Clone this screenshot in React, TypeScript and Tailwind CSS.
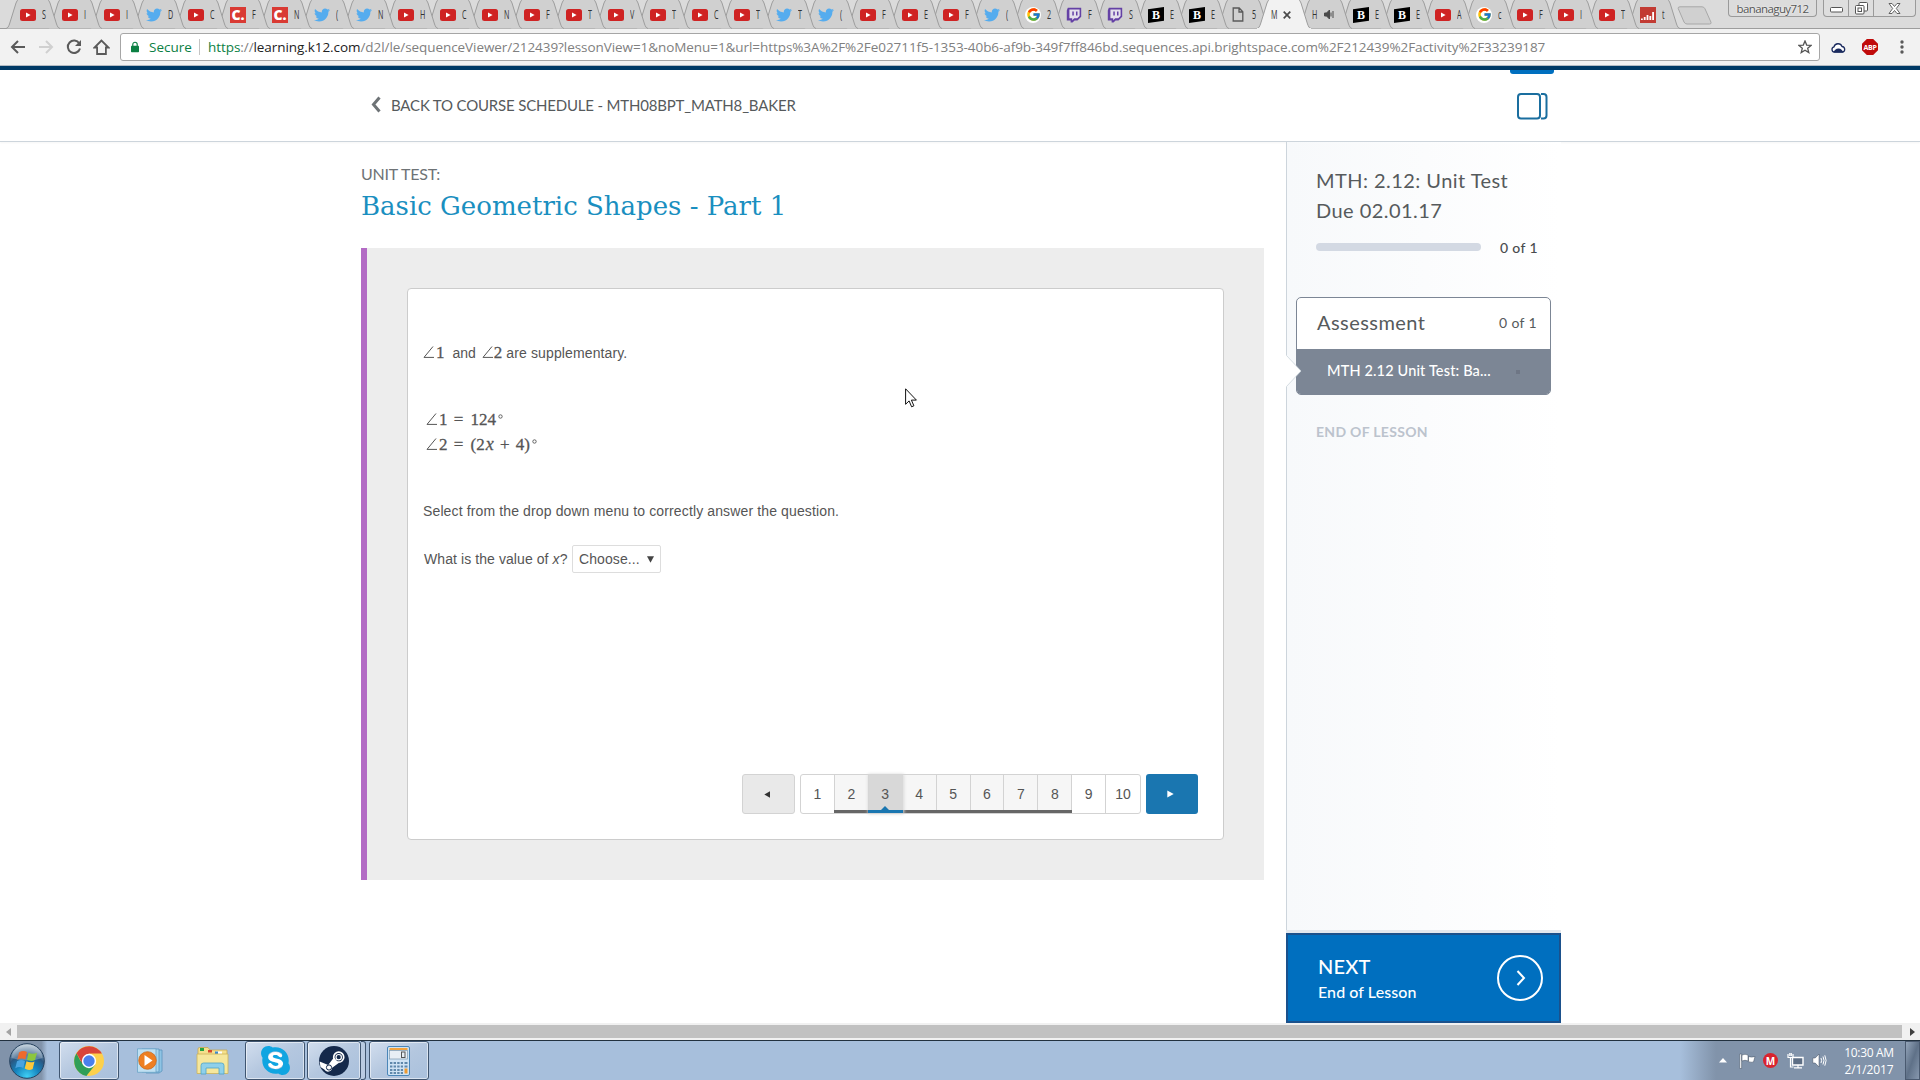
import type { ReactNode } from 'react';
import clsx from 'clsx';
import { FaSkype, FaTwitter } from 'react-icons/fa';
import { FcGoogle } from 'react-icons/fc';

type TabIcon = 'yt' | 'tw' | 'c' | 'google' | 'twitch' | 'b' | 'doc' | 'active' | 'audio' | 'chart';

interface Tab {
  icon: TabIcon;
  title: string;
}

const tabs: Tab[] = [
  { icon: 'yt', title: 'S' },
  { icon: 'yt', title: 'I' },
  { icon: 'yt', title: 'I' },
  { icon: 'tw', title: 'D' },
  { icon: 'yt', title: 'C' },
  { icon: 'c', title: 'F' },
  { icon: 'c', title: 'N' },
  { icon: 'tw', title: '(' },
  { icon: 'tw', title: 'N' },
  { icon: 'yt', title: 'H' },
  { icon: 'yt', title: 'C' },
  { icon: 'yt', title: 'N' },
  { icon: 'yt', title: 'F' },
  { icon: 'yt', title: 'T' },
  { icon: 'yt', title: 'V' },
  { icon: 'yt', title: 'T' },
  { icon: 'yt', title: 'C' },
  { icon: 'yt', title: 'T' },
  { icon: 'tw', title: 'T' },
  { icon: 'tw', title: '(' },
  { icon: 'yt', title: 'F' },
  { icon: 'yt', title: 'E' },
  { icon: 'yt', title: 'F' },
  { icon: 'tw', title: '(' },
  { icon: 'google', title: '2' },
  { icon: 'twitch', title: 'F' },
  { icon: 'twitch', title: 'S' },
  { icon: 'b', title: 'E' },
  { icon: 'b', title: 'E' },
  { icon: 'doc', title: '5' },
  { icon: 'active', title: 'M' },
  { icon: 'audio', title: 'H' },
  { icon: 'b', title: 'E' },
  { icon: 'b', title: 'E' },
  { icon: 'yt', title: 'A' },
  { icon: 'google', title: 'c' },
  { icon: 'yt', title: 'F' },
  { icon: 'yt', title: 'I' },
  { icon: 'yt', title: 'T' },
  { icon: 'chart', title: 't' },
];

function Favicon({ icon }: { icon: TabIcon }) {
  switch (icon) {
    case 'yt':
      return (
        <svg width="16" height="12" viewBox="0 0 16 12">
          <rect width="16" height="12" rx="2.5" fill="#cf2323" />
          <path d="M6 3.4v5.2L10.6 6z" fill="#fff" />
        </svg>
      );
    case 'tw':
      return <FaTwitter className="size-4 text-[#55acee]" />;
    case 'c':
      return (
        <span className="flex h-4 w-4 items-center justify-center bg-[#d93a33] font-['Open_Sans',sans-serif] text-[14px] leading-none font-extrabold text-white">
          C.
        </span>
      );
    case 'google':
      return (
        <span className="flex size-4 items-center justify-center rounded-full bg-white">
          <FcGoogle className="size-[15px]" />
        </span>
      );
    case 'twitch':
      return (
        <svg width="16" height="16" viewBox="0 0 16 16">
          <path d="M1.8.8h13.4v9l-3.7 3.7H8.6L6.5 15.6H4.6v-2.1H.8V3.6z" fill="#6441a5" />
          <path d="M3.4 2.4h10.2v6.7l-2.3 2.2H8.2l-2 1.9v-1.9H3.4z" fill="#e4e0ec" />
          <path d="M6.3 4.6h1.5v4H6.3zM10 4.6h1.5v4H10z" fill="#6441a5" />
        </svg>
      );
    case 'b':
      return (
        <span className="relative flex size-4 items-center justify-center font-['Liberation_Serif',serif] text-[12px] leading-none font-bold text-white">
          <svg className="absolute inset-0" width="16" height="16" viewBox="0 0 16 16">
            <path d="M0 2.2L16 0v13.8L0 16z" fill="#000" />
          </svg>
          <span className="relative">B</span>
        </span>
      );
    case 'doc':
      return (
        <svg width="12" height="15" viewBox="0 0 12 15" fill="none" stroke="#5a5a5a" strokeWidth="1.3">
          <path d="M1.2 1h6l3.6 3.8V14H1.2zM7 1v4h3.8" />
        </svg>
      );
    case 'chart':
      return (
        <svg width="16" height="16" viewBox="0 0 16 16">
          <rect width="16" height="16" fill="#c23b33" />
          <path d="M1 11.500h1.800V13H1zM3.800 10h1.800v3H3.800zM6.600 8h1.800v5H6.600zM9.400 9h1.800v4H9.400zM12.200 5H14v8h-1.800z" fill="#fff" />
        </svg>
      );
    default:
      return null;
  }
}

function SpeakerIcon() {
  return (
    <svg width="12" height="11" viewBox="0 0 12 11" fill="none" stroke="#4a4a4a" strokeWidth="1">
      <path d="M.5 4h2L5.500 1v9L2.500 7h-2z" fill="#4a4a4a" />
      <path d="M7 3.500v4M9 2v7" />
    </svg>
  );
}

function TabTitle({ children }: { children: ReactNode }) {
  return (
    <span className="w-[5px] shrink-0 text-[12px] leading-4 text-[#333]">
      <span className="inline-block origin-left scale-x-[0.6]">{children}</span>
    </span>
  );
}

function BrowserTab({ tab, index }: { tab: Tab; index: number }) {
  const active = tab.icon === 'active';
  return (
    <div
      className={clsx('relative h-[29px] shrink-0', index < 21 ? 'w-[42px]' : 'w-[41px]')}
      style={{ zIndex: active ? 100 : 60 - index }}
    >
      <svg className="absolute top-0 left-0" width="55" height="29" viewBox="0 0 55 29">
        <path
          d="M0 28.500C2 28 2.500 26.500 3.500 24L10 3Q11 0 13 -1H41Q43 0 44 3L50.500 24C51.500 26.500 52 28 54 28.500"
          fill={active ? '#f2f2f2' : '#d0d0d0'}
          stroke="#9d9d9d"
        />
        {active && <path d="M0 29h54" stroke="#f2f2f2" strokeWidth="2" />}
      </svg>
      {active || tab.icon === 'audio' ? (
        <div className="relative flex h-[29px] items-center gap-[7px] pl-[14px]">
          <TabTitle>{tab.title}</TabTitle>
          {active ? (
            <svg width="8" height="8" viewBox="0 0 8 8" stroke="#4a4a4a" strokeWidth="1.700">
              <path d="M.7.7l6.600 6.600M7.300.7L.7 7.300" />
            </svg>
          ) : (
            <SpeakerIcon />
          )}
        </div>
      ) : (
        <div className="relative flex h-[29px] items-center gap-[6px] pl-[14px]">
          <span className="flex w-4 shrink-0 justify-center">
            <Favicon icon={tab.icon} />
          </span>
          <TabTitle>{tab.title}</TabTitle>
        </div>
      )}
    </div>
  );
}

function WindowControls() {
  return (
    <div className="ml-auto flex items-start gap-[6px] pr-1">
      <div className="flex h-[17px] w-[89px] items-center justify-center rounded-b-[4px] border border-t-0 border-[#9a9a9a] bg-[#dcdcdc] pt-[2px] text-[11.5px] leading-none tracking-[-0.6px] text-[#555] [text-shadow:0_0_2px_#fff]">
        bananaguy712
      </div>
      <div className="flex h-[17px] w-[93px] rounded-b-[4px] border border-t-0 border-[#9a9a9a] bg-[#dedede]">
        <div className="flex w-[25px] items-center justify-center border-r border-[#9a9a9a] pt-[3px]">
          <svg width="13" height="6" viewBox="0 0 13 6">
            <rect x=".5" y=".5" width="12" height="4.500" rx="1" fill="#fff" stroke="#555" />
          </svg>
        </div>
        <div className="flex w-[25px] items-center justify-center border-r border-[#9a9a9a]">
          <svg width="13" height="13" viewBox="0 0 13 13" fill="#fff" stroke="#555">
            <rect x="4" y=".5" width="8.500" height="8.500" rx="1" />
            <rect x=".5" y="3.500" width="8.500" height="8.500" rx="1" />
            <rect x="3" y="6" width="3.500" height="3.500" />
          </svg>
        </div>
        <div className="flex flex-1 items-center justify-center">
          <svg width="13" height="11" viewBox="0 0 13 11">
            <path d="M1 .5h3l2.500 3 2.500-3h3L8.300 5.500l3.700 5H9L6.500 7.500 4 10.500H1l3.700-5z" fill="#fff" stroke="#555" strokeWidth=".9" />
          </svg>
        </div>
      </div>
    </div>
  );
}

function TabStrip() {
  return (
    <div className="relative flex h-[29px] shrink-0 bg-[#dbdbdb] pl-[6px] font-['Open_Sans',sans-serif]">
      <div className="absolute bottom-0 left-0 h-px w-full bg-[#9d9d9d]" />
      {tabs.map((tab, i) => (
        <BrowserTab key={i} tab={tab} index={i} />
      ))}
      <svg className="mt-[6px] ml-[10px]" width="35" height="19" viewBox="0 0 35 19">
        <path d="M3 .8h22q2 0 3 2l6 13.500q.6 1.700-1.500 1.700H10q-2 0-3-2L1.200 2.500Q.8.8 3 .8z" fill="#d0d0d0" stroke="#a8a8a8" />
      </svg>
      <WindowControls />
    </div>
  );
}

function Toolbar() {
  return (
    <div className="flex h-[37px] shrink-0 items-center border-b border-[#b4bcc4] bg-[#f2f2f2] font-['Open_Sans',sans-serif]">
      <div className="flex w-[120px] shrink-0 items-center pl-[10px]">
        <svg width="15" height="14" viewBox="0 0 15 14" fill="none" stroke="#5a5a5a" strokeWidth="2">
          <path d="M15 7H2M8 1L2 7l6 6" />
        </svg>
        <svg className="ml-[14px]" width="15" height="14" viewBox="0 0 15 14" fill="none" stroke="#d0d0d0" strokeWidth="2">
          <path d="M0 7h13M7 1l6 6-6 6" />
        </svg>
        <svg className="ml-[12px]" width="16" height="16" viewBox="0 0 16 16" fill="none" stroke="#5a5a5a" strokeWidth="2">
          <path d="M13.300 4.500A6.200 6.200 0 1 0 14 9.500" />
          <path d="M15 1v6H9z" fill="#5a5a5a" stroke="none" />
        </svg>
        <svg className="ml-[11px]" width="17" height="16" viewBox="0 0 17 16" fill="none" stroke="#5a5a5a" strokeWidth="1.800">
          <path d="M8.500 1.500L1.500 8.500h2.600V15h8.800V8.500h2.600z" />
        </svg>
      </div>
      <div className="flex h-[28px] w-[1700px] shrink-0 items-center rounded-[3px] border border-[#a6a6a6] bg-white pl-[10px]">
        <svg width="8" height="12" viewBox="0 0 9 12">
          <rect y="4.500" width="9" height="7.500" rx=".8" fill="#0b8043" />
          <path d="M2 5V3.200a2.500 2.500 0 0 1 5 0V5" fill="none" stroke="#0b8043" strokeWidth="1.300" />
        </svg>
        <span className="ml-[10px] w-[50px] text-[13.500px] leading-5 text-[#0b8043]">Secure</span>
        <span className="mr-[8px] h-[16px] w-px bg-[#c4c4c4]" />
        <span className="text-[13.500px] leading-5 tracking-[-0.067px] whitespace-nowrap text-[#808080]">
          <span className="text-[#0b8043]">https</span>://<span className="text-[#222]">learning.k12.com</span>
          /d2l/le/sequenceViewer/212439?lessonView=1&amp;noMenu=1&amp;url=https%3A%2F%2Fe02711f5-1353-40b6-af9b-349f7ff846bd.sequences.api.brightspace.com%2F212439%2Factivity%2F33239187
        </span>
        <svg className="mr-[7px] ml-auto" width="14" height="14" viewBox="0 0 14 14" fill="none" stroke="#555" strokeWidth="1.300">
          <path d="M7 1l1.700 4.100 4.400.3-3.400 2.900 1.100 4.300L7 10.300l-3.800 2.300 1.100-4.300L.9 5.400l4.400-.3z" />
        </svg>
      </div>
      <svg className="ml-[11px]" width="15" height="11" viewBox="0 0 15 11">
        <path d="M3.500 10.200a2.700 2.700 0 0 1-.5-5.300A4.200 4.200 0 0 1 11 4.500a2.900 2.900 0 0 1 .5 5.700z" fill="#fff" stroke="#1a2a5e" strokeWidth="1.300" />
        <path d="M2.500 10.500c.5-2 2.500-4 5-4s4 2 5 4z" fill="#1a2a5e" />
      </svg>
      <span className="ml-[16px] flex size-4 items-center justify-center bg-[#c00b0b] text-[7px] leading-none font-bold tracking-[-0.3px] text-white [clip-path:polygon(30%_0,70%_0,100%_30%,100%_70%,70%_100%,30%_100%,0_70%,0_30%)]">
        ABP
      </span>
      <svg className="ml-[22px]" width="4" height="14" viewBox="0 0 4 14" fill="#5a5a5a">
        <circle cx="2" cy="2" r="1.700" />
        <circle cx="2" cy="7" r="1.700" />
        <circle cx="2" cy="12" r="1.700" />
      </svg>
    </div>
  );
}

function CourseHeader() {
  return (
    <header className="flex h-[76px] shrink-0 flex-col border-b border-[#cdd5dc] shadow-[0_1px_2px_rgba(0,0,0,0.04)]">
      <div className="h-1 shrink-0 bg-[#003a66]" />
      <div className="flex flex-1 items-start">
        <div className="flex w-[1510px] items-center pt-[25px] pl-[371px]">
          <svg className="-mt-px" width="10" height="17" viewBox="0 0 10 17" fill="none" stroke="#6e7376" strokeWidth="3">
            <path d="M8.500 1.500L2.500 8.500l6 7" />
          </svg>
          <span className="ml-[10px] text-[15px] leading-5 tracking-[-0.18px] text-[#565a5c]">
            BACK TO COURSE SCHEDULE - MTH08BPT_MATH8_BAKER
          </span>
        </div>
        <div className="flex w-[44px] flex-col items-center">
          <div className="h-1 w-full rounded-b-[3px] bg-[#006fbf]" />
          <svg className="mt-[19px]" width="31" height="27" viewBox="0 0 31 27" fill="none" stroke="#1a6e9f" strokeWidth="2">
            <rect x="1" y="1" width="22" height="24.500" rx="3" />
            <path d="M24 1h2.500q3 0 3 3v18.500q0 3-3 3H24" />
          </svg>
        </div>
      </div>
    </header>
  );
}

function Angle() {
  return (
    <svg className="inline-block align-baseline" width="11" height="12" viewBox="0 0 11 12" fill="none" stroke="#555" strokeWidth="1">
      <path d="M10 .5L1 11.400h10" />
    </svg>
  );
}

function Degree() {
  return (
    <span className="ml-[2px]">
      <svg className="mb-[10px] inline-block" width="5" height="5" viewBox="0 0 5 5" fill="none" stroke="#555" strokeWidth=".9">
        <circle cx="2.500" cy="2.500" r="1.700" />
      </svg>
    </span>
  );
}

const pages = [1, 2, 3, 4, 5, 6, 7, 8, 9, 10];

function Pager() {
  return (
    <div className="flex h-10 gap-[5px]">
      <button className="flex w-[53px] items-center justify-center rounded-[3px] border border-[#d3d3d3] bg-[#e9e9e9]">
        <svg className="-ml-1" width="6" height="7" viewBox="0 0 6 7">
          <path d="M6 .3v6.400L.3 3.500z" fill="#333" />
        </svg>
      </button>
      <div className="flex w-[341px] rounded-[3px] border border-[#d3d3d3] bg-white">
        {pages.map((page) => {
          const answered = page >= 2 && page <= 8;
          const current = page === 3;
          return (
            <div
              key={page}
              className={clsx(
                'relative flex w-[34px] items-center justify-center border-r border-[#d3d3d3] text-[14px] last:border-r-0',
                answered && !current && 'bg-[#f6f6f6]',
                current && 'z-10 border-[#d8d8d8] bg-[#d8d8d8] shadow-[0_0_3px_1px_#d8d8d8]',
              )}
            >
              {page}
              {answered && (
                <span className={clsx('absolute bottom-0 left-[-1px] h-[3px] w-[35px]', current ? 'bg-[#1a76b0]' : 'bg-[#666]')} />
              )}
              {current && (
                <svg className="absolute bottom-[3px] left-[12px]" width="8" height="4" viewBox="0 0 8 4">
                  <path d="M0 4l4-4 4 4z" fill="#1a76b0" />
                </svg>
              )}
            </div>
          );
        })}
      </div>
      <button className="flex w-[52px] items-center justify-center rounded-[3px] bg-[#1a76b0]">
        <svg className="-ml-1" width="7" height="8" viewBox="0 0 7 8">
          <path d="M.3.4v7.200L6.700 4z" fill="#fff" />
        </svg>
      </button>
    </div>
  );
}

function Question() {
  return (
    <div className="flex h-[552px] w-[817px] flex-col rounded-[4px] border border-[#ccc] bg-white pt-[52px] pr-[25px] pb-[25px] pl-[15px] font-['Liberation_Sans',Arial,sans-serif] text-[14px] leading-6 text-[#555]">
      <div className="flex h-6 items-baseline whitespace-pre">
        <Angle />
        <span className="ml-[2px] font-['Liberation_Serif',serif] text-[17px] [-webkit-text-stroke:0.3px_#555]">1</span>
        <span className="ml-[8px]">and</span>
        <span className="ml-[6px] flex items-baseline">
          <Angle />
          <span className="ml-px font-['Liberation_Serif',serif] text-[17px] [-webkit-text-stroke:0.3px_#555]">2</span>
        </span>
        <span className="ml-[4px] tracking-[0.12px]">are supplementary.</span>
      </div>
      <div className="mt-[43px] flex flex-col pl-[3px] font-['Liberation_Serif',serif] text-[17px] leading-6 [-webkit-text-stroke:0.3px_#555]">
        <div className="flex h-6 items-baseline">
          <Angle />
          <span className="ml-[2px]">1</span>
          <span className="ml-[5px] w-[12px] text-center">=</span>
          <span className="ml-[6px]">124</span>
          <Degree />
        </div>
        <div className="flex h-6 items-baseline">
          <Angle />
          <span className="ml-[2px]">2</span>
          <span className="ml-[5px] w-[12px] text-center">=</span>
          <span className="ml-[6px]">(2</span>
          <i className="ml-px text-[18px]">x</i>
          <span className="ml-[5px] w-[12px] text-center">+</span>
          <span className="ml-[5px]">4)</span>
          <Degree />
        </div>
      </div>
      <p className="mt-[43px] h-6 tracking-[0.13px]">Select from the drop down menu to correctly answer the question.</p>
      <div className="mt-[22px] flex h-[28px] items-center pl-px">
        <span className="w-[148px] tracking-[0.08px] whitespace-nowrap">
          What is the value of <i>x</i>?
        </span>
        <button className="flex h-[28px] w-[89px] items-center justify-between rounded-[2px] border border-[#ddd] bg-white pr-[6px] pl-[6px] tracking-[0.1px]">
          Choose...
          <svg width="7" height="7" viewBox="0 0 7 7">
            <path d="M0 .3h7L3.500 6.700z" fill="#444" />
          </svg>
        </button>
      </div>
      <div className="mt-auto flex justify-end">
        <Pager />
      </div>
    </div>
  );
}

function Sidebar() {
  return (
    <aside className="flex h-[881px] w-[275px] shrink-0 flex-col">
      <div className="relative flex h-[788px] flex-col border-l border-[#cdd5dc] bg-linear-to-r from-[#f7f9fb] to-white">
        <div className="pt-[23px] pl-[29px] text-[20px] leading-[30px] tracking-[0.45px] text-[#565a5c]">
          <div>MTH: 2.12: Unit Test</div>
          <div>Due 02.01.17</div>
        </div>
        <div className="mt-[12px] flex h-5 items-center pl-[29px]">
          <span className="-mt-px h-2 w-[165px] rounded-full bg-[#d3d9e3]" />
          <span className="ml-[19px] text-[14px] font-medium tracking-[0.35px] text-[#494c4e]">0 of 1</span>
        </div>
        <div className="mt-[40px] ml-[9px] h-[98px] w-[255px] overflow-hidden rounded-[5px] border border-[#7c8695] bg-white">
          <div className="flex h-[51px] items-center justify-between pr-[13px] pb-[3px] pl-[20px] text-[#565a5c]">
            <span className="text-[20px] tracking-[0.45px]">Assessment</span>
            <span className="text-[14px] tracking-[0.35px]">0 of 1</span>
          </div>
          <div className="flex h-[46px] items-center bg-[#7c8695] pb-[3px] pl-[30px]">
            <span className="w-[189px] text-[14.5px] font-medium tracking-[0.15px] whitespace-nowrap text-white">MTH 2.12 Unit Test: Ba...</span>
            <span className="mt-[3px] size-1 bg-[#6e7685]" />
          </div>
        </div>
        <svg className="absolute top-[213px] left-[-1px]" width="16" height="32" viewBox="0 0 16 32">
          <path d="M0 0l15 16L0 32z" fill="#fff" />
          <path d="M.5.5l14.500 15.500L.5 31.500" fill="none" stroke="#cdd5dc" strokeWidth=".8" />
        </svg>
        <div className="mt-[27px] pl-[29px] text-[14px] leading-5 font-bold tracking-[0.3px] text-[#bcc3cd]">END OF LESSON</div>
      </div>
      <div className="h-[3px] shrink-0 bg-[#e3e8ee]" />
      <div className="flex h-[90px] shrink-0 items-center justify-between border-2 border-[#1b518c] bg-[#006fbf] pr-[16px] pl-[30px] text-white">
        <div className="flex flex-col">
          <span className="text-[20px] leading-[27px] font-medium tracking-[0.2px]">NEXT</span>
          <span className="text-[16px] leading-6 font-medium tracking-[0.08px]">End of Lesson</span>
        </div>
        <svg width="46" height="46" viewBox="0 0 46 46" fill="none" stroke="#fff" strokeWidth="2">
          <circle cx="23" cy="23" r="22" />
          <path d="M20.500 16l6.500 7-6.500 7" />
        </svg>
      </div>
    </aside>
  );
}

function ScrollBar() {
  return (
    <div className="flex h-[17px] shrink-0 items-center bg-[#f1f1f1]">
      <svg className="mx-[6px]" width="5" height="8" viewBox="0 0 5 8">
        <path d="M5 0v8L0 4z" fill="#a3a3a3" />
      </svg>
      <div className="h-[13px] w-[1885px] bg-[#c1c1c1]" />
      <svg className="ml-[8px]" width="5" height="8" viewBox="0 0 5 8">
        <path d="M0 0v8l5-4z" fill="#404040" />
      </svg>
    </div>
  );
}

function TaskButton({ children, className }: { children: ReactNode; className?: string }) {
  return (
    <div
      className={clsx(
        'flex h-[39px] shrink-0 items-center justify-center rounded-[3px] border border-[#3f5570] bg-linear-to-br from-[#d2deee] via-[#b4c7df] to-[#a9c0dc] shadow-[inset_0_0_0_1px_rgba(255,255,255,0.55)]',
        className,
      )}
    >
      {children}
    </div>
  );
}

function StartOrb() {
  return (
    <svg width="36" height="36" viewBox="0 0 36 36">
      <defs>
        <radialGradient id="orb" cx=".5" cy=".95" r=".9">
          <stop offset="0" stopColor="#3fd0f5" />
          <stop offset=".4" stopColor="#1583bd" />
          <stop offset=".7" stopColor="#2b5680" />
          <stop offset="1" stopColor="#a9bccd" />
        </radialGradient>
      </defs>
      <circle cx="18" cy="18" r="17.300" fill="url(#orb)" stroke="#26425f" strokeWidth="1" />
      <path d="M2.500 15a15.600 15.600 0 0 1 31 0q-15 5-31 0z" fill="#fff" opacity=".25" />
      <path d="M10 9.500q4-2.500 8-.5l-1.700 7.500q-4-2-8 .3z" fill="#ef6a2c" />
      <path d="M19.500 9.800q4 2 8.500 0l-2 7.200q-4 2-8-.2z" fill="#8cc63f" />
      <path d="M8 18.200q4-2.300 8-.3L14.300 25q-4-2-8 .3z" fill="#4aa3e0" />
      <path d="M17.500 18.300q4 2 8 .2L23.700 26q-4 2-8-.4z" fill="#fdc83a" />
    </svg>
  );
}

function ChromeLogo() {
  return (
    <svg width="30" height="30" viewBox="0 0 30 30">
      <circle cx="15" cy="15" r="15" fill="#fcd04b" />
      <path d="M2.500 7.200L8.500 18.700 15 22.500 12.500 30A15 15 0 0 1 2.500 7.200z" fill="#2f9e58" />
      <path d="M12.500 29.800L21.300 18.800 15 15 6 15z" fill="#2f9e58" />
      <path d="M2.500 7.200A15 15 0 0 1 27.900 7.500H15L8.500 18z" fill="#d8453a" />
      <circle cx="15" cy="15" r="7.200" fill="#fff" />
      <circle cx="15" cy="15" r="5.700" fill="#4a80ec" />
    </svg>
  );
}

function MediaPlayerIcon() {
  return (
    <svg width="29" height="26" viewBox="0 0 29 26">
      <path d="M9 2h16v21l-3 2H9z" fill="#8fc4e4" stroke="#5b96bd" strokeWidth=".8" />
      <path d="M5 1h17v23H5z" fill="#a8d6ee" stroke="#5b96bd" strokeWidth=".8" />
      <path d="M.5.800h18.500v23.500H.5z" fill="#bfe0f2" stroke="#6ba3c7" strokeWidth=".8" />
      <circle cx="10.500" cy="12.500" r="8.800" fill="#ee7f22" stroke="#c96a1f" strokeWidth=".8" />
      <path d="M7.500 7v11l8-5.500z" fill="#fff" />
    </svg>
  );
}

function FolderIcon() {
  return (
    <svg width="33" height="29" viewBox="0 0 33 29">
      <path d="M2 3q0-1.500 1.500-1.500H12L14 4h17v8H2z" fill="#f5e08c" stroke="#c8a850" strokeWidth=".8" />
      <path d="M4 2h4v3H4z" fill="#25a541" />
      <path d="M12 4h4v2.500h-4z" fill="#d9482b" />
      <path d="M20 5.500h6V8h-6z" fill="#fff" />
      <path d="M19 5.500h3V8h-3z" fill="#3b8ad0" />
      <path d="M1 8h31v19.500H1z" fill="#f6e79c" stroke="#cdb259" strokeWidth=".8" />
      <path d="M5 28V19.500q0-2.500 2.500-2.500h18q2.500 0 2.500 2.500V28h-5v-6H10v6z" fill="#8fd0ea" stroke="#4fa3c7" strokeWidth=".8" />
    </svg>
  );
}

function SteamLogo() {
  return (
    <svg width="30" height="30" viewBox="0 0 30 30">
      <circle cx="15" cy="15" r="15" fill="#14294b" />
      <circle cx="19.700" cy="11.200" r="5" fill="none" stroke="#fff" strokeWidth="1.700" />
      <circle cx="19.700" cy="11.200" r="2.700" fill="none" stroke="#fff" strokeWidth="1.200" />
      <path d="M.6 15.500l8.600 3.400 5.700-7.400 4.800 5.500-6.500 4.800a4.300 4.300 0 0 1-7.900 1.800L1.500 21z" fill="#fff" />
      <circle cx="10" cy="21.500" r="2.600" fill="none" stroke="#14294b" strokeWidth="1" />
    </svg>
  );
}

function CalculatorIcon() {
  return (
    <svg width="23" height="30" viewBox="0 0 23 30">
      <rect x=".5" y=".5" width="22" height="29" rx="1.500" fill="#cfe3f4" stroke="#4a86b8" />
      <rect x="2.500" y="2" width="18" height="2" fill="#f1a33f" />
      <rect x="2.500" y="4.500" width="18" height="8.500" fill="#e8eff5" stroke="#7d98ae" strokeWidth=".7" />
      <rect x="14.500" y="6" width="3.500" height="5.500" fill="none" stroke="#555" />
      <path d="M3 17h13M3 20.500h13M3 24h13M3 27h13" stroke="#5f88ab" strokeWidth="2" strokeDasharray="2.400 1.200" />
      <path d="M17.500 17h3M17.500 20.500h3" stroke="#5f88ab" strokeWidth="2" />
      <path d="M17.500 25h3" stroke="#ee9a30" strokeWidth="5" />
    </svg>
  );
}

function Tray() {
  return (
    <div className="ml-auto flex h-[39px] w-[240px] items-center bg-linear-to-r from-[#a7bfdc] via-[#8193aa] via-15% to-[#8193aa]">
      <svg className="ml-[39px]" width="8" height="5" viewBox="0 0 8 5">
        <path d="M0 4.500L4 0l4 4.500z" fill="#fff" />
      </svg>
      <svg className="ml-[12px]" width="17" height="16" viewBox="0 0 17 16" fill="#fff" stroke="#3c4a5c" strokeWidth=".5">
        <path d="M.8 1h1.800v14.500H.8z" />
        <path d="M3 2q3-1.500 6 0v6Q6 6.500 3 8zM9.500 3.500q3 1.200 6.500 0l-1.500 5.500q-2 .6-5-.3z" />
      </svg>
      <span className="ml-[7px] flex size-[15px] items-center justify-center rounded-full bg-[#d9232e] font-['Open_Sans',sans-serif] text-[10px] leading-none font-bold text-white">
        M
      </span>
      <svg className="ml-[9px]" width="17" height="16" viewBox="0 0 17 16" stroke="#fff" fill="none" strokeWidth="1.400">
        <path d="M5.500 4.500h10.500v7.500H5.500z" fill="#5d6e85" />
        <path d="M11 12v2.500M7 14.800h8M1 1v3.500h5V1M2.800 0v3M4.300 0v3M3.500 5v9h3" strokeWidth="1.200" />
      </svg>
      <svg className="ml-[8px]" width="15" height="15" viewBox="0 0 15 15" fill="none" stroke="#fff" strokeWidth="1">
        <path d="M.8 5h2.400L7 1v13L3.200 10H.8z" fill="#fff" stroke="#3c4a5c" strokeWidth=".5" />
        <path d="M9 5q1.200 2.500 0 5M11 3.500q2 4 0 8M12.800 2.300q2.600 5.200 0 10.400" />
      </svg>
      <div className="ml-[12px] flex w-[60px] flex-col items-center font-['Open_Sans',sans-serif] text-[12px] leading-[17px] tracking-[-0.35px] whitespace-nowrap text-white">
        <span>10:30 AM</span>
        <span className="tracking-[-0.1px]">2/1/2017</span>
      </div>
      <div className="ml-auto h-[39px] w-[15px] border border-[#4a5a70] bg-linear-to-br from-[#94a5ba] via-[#5f7188] to-[#8798ae]" />
    </div>
  );
}

function Taskbar() {
  return (
    <div className="flex h-10 shrink-0 items-center border-t border-[#22313f] bg-[#a7bfdc]">
      <div className="flex h-full w-[59px] items-center bg-linear-to-r from-[#8193aa] from-70% to-[#a7bfdc] to-80% pl-[9px]">
        <StartOrb />
      </div>
      <TaskButton className="w-[60px]">
        <ChromeLogo />
      </TaskButton>
      <div className="flex w-[126px] items-center gap-[30px] pl-[18px]">
        <MediaPlayerIcon />
        <FolderIcon />
      </div>
      <TaskButton className="w-[60px]">
        <span className="relative flex size-[30px] items-center justify-center">
          <span className="absolute size-[17px] rounded-full bg-white" />
          <FaSkype className="relative size-[33px] shrink-0 text-[#10a5e1]" />
        </span>
      </TaskButton>
      <div className="flex w-[64px] pl-[2px]">
        <TaskButton className="w-[54px]">
          <SteamLogo />
        </TaskButton>
        <div className="h-[39px] w-[5px] rounded-r-[3px] border border-l-0 border-[#3f5570] bg-[#b9cbe2]" />
      </div>
      <TaskButton className="w-[60px]">
        <span className="-ml-[2px]">
          <CalculatorIcon />
        </span>
      </TaskButton>
      <Tray />
    </div>
  );
}

export default function App() {
  return (
    <div className="relative flex h-[1080px] w-[1920px] flex-col overflow-hidden bg-white font-['Lato',sans-serif]">
      <TabStrip />
      <Toolbar />
      <CourseHeader />
      <div className="flex h-[881px] shrink-0 pl-[361px]">
        <main className="w-[925px] shrink-0 pt-[21px]">
          <div className="text-[16px] leading-[22px] tracking-[-0.2px] text-[#6e7376]">UNIT TEST:</div>
          <h1 className="h-[63px] font-['DejaVu_Serif',serif] text-[26px] leading-[43px] font-normal whitespace-nowrap text-[#1a8fc0]">
            Basic Geometric Shapes - Part 1
          </h1>
          <div className="h-[632px] w-[903px] border-l-[6px] border-[#b36bc5] bg-[#ededed] pt-[40px] pl-[40px]">
            <Question />
          </div>
        </main>
        <Sidebar />
      </div>
      <ScrollBar />
      <Taskbar />
      {/* Mouse pointer */}
      <svg className="absolute top-[388px] left-[905px]" width="13" height="20" viewBox="0 0 13 20">
        <path d="M.6.8v15.500l3.500-3.400 2.500 5.900 2.300-1-2.500-5.700h5z" fill="#fff" stroke="#111" strokeWidth="1" />
      </svg>
    </div>
  );
}
